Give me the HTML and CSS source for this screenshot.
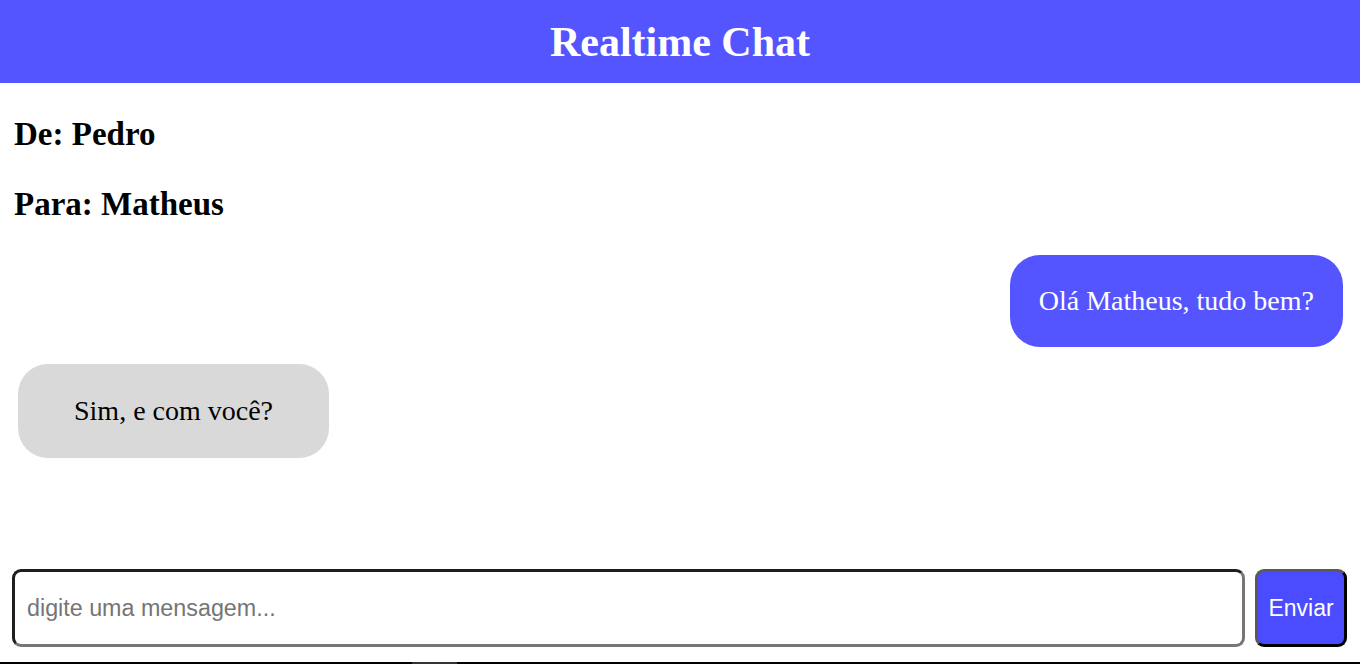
FILE: index.html
```html
<!DOCTYPE html>
<html lang="pt-BR">
<head>
<meta charset="utf-8">
<title>Realtime Chat</title>
<link rel="stylesheet" href="styles.css">
</head>
<body>
  <header class="topbar">
    <h1 class="title">Realtime Chat</h1>
  </header>
  <main class="chat">
    <section class="info">
      <h2 class="info-line">De: Pedro</h2>
      <h2 class="info-line info-line--to">Para: Matheus</h2>
    </section>
    <section class="messages">
      <div class="bubble bubble--sent">Olá Matheus, tudo bem?</div>
      <div class="bubble bubble--received">Sim, e com você?</div>
    </section>
  </main>
  <form class="composer">
    <input class="composer-input" type="text" placeholder="digite uma mensagem...">
    <button class="composer-send" type="button">Enviar</button>
  </form>
  <div class="bottom-line"></div>
</body>
</html>
```

FILE: styles.css
```css
html, body {
  margin: 0;
  padding: 0;
}

body {
  height: 100vh;
  overflow: hidden;
  display: flex;
  flex-direction: column;
  background: #ffffff;
  font-family: "Liberation Serif", "Times New Roman", serif;
  color: #000;
}

.topbar {
  height: 83px;
  flex: none;
  background: #5555ff;
  display: flex;
  align-items: center;
  justify-content: center;
}

.title {
  margin: 0;
  font-size: 42px;
  font-weight: bold;
  color: #ffffff;
  line-height: normal;
}

.chat {
  flex: 1;
  min-height: 0;
  display: flex;
  flex-direction: column;
}

.info {
  padding: 33px 0 0 14px;
}

.info-line {
  margin: 0;
  font-size: 33px;
  line-height: 36px;
  font-weight: bold;
}

.info-line--to {
  margin-top: 34px;
}

.messages {
  margin-top: 33px;
  display: flex;
  flex-direction: column;
  gap: 17px;
}

.bubble {
  font-size: 28px;
  line-height: 34px;
  padding: 29px 29px;
  border-radius: 30px;
}

.bubble--sent {
  align-self: flex-end;
  margin-right: 17px;
  background: #5555ff;
  color: #ffffff;
}

.bubble--received {
  align-self: flex-start;
  margin-left: 18px;
  padding: 30px 56px 30px 56px;
  background: #d9d9d9;
  color: #000;
}

.composer {
  flex: none;
  height: 78px;
  margin: 0;
  padding: 0 13px 0 12px;
  display: flex;
  gap: 10px;
}

.composer-input {
  flex: 1;
  min-width: 0;
  box-sizing: border-box;
  height: 78px;
  margin: 0;
  padding: 0 12px;
  border: 3px solid;
  border-color: #1e1e1e #767676 #767676 #1e1e1e;
  border-radius: 9px;
  font-family: "Liberation Sans", Arial, sans-serif;
  font-size: 23.3px;
  color: #000;
  outline: none;
  background: #fff;
}

.composer-input::placeholder {
  color: #757575;
}

.composer-send {
  flex: none;
  box-sizing: border-box;
  width: 92px;
  height: 78px;
  margin: 0;
  padding: 0;
  border: 3px solid;
  border-color: #5a5a5a #000 #000 #5a5a5a;
  border-radius: 9px;
  background: #4b4bff;
  color: #ffffff;
  font-family: "Liberation Sans", Arial, sans-serif;
  font-size: 23px;
}

.bottom-line {
  flex: none;
  margin-top: 15px;
  height: 2px;
  background: linear-gradient(to right, #000 0, #000 412px, #333 412px, #333 457px, #000 457px);
}
```
